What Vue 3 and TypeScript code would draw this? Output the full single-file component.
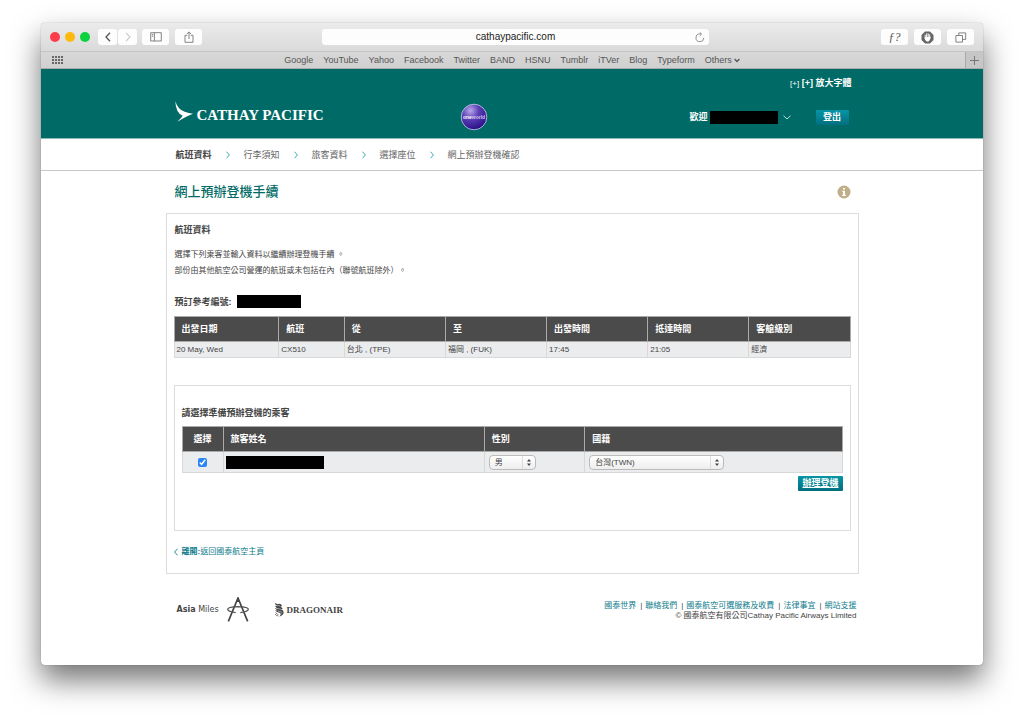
<script setup lang="ts">
import { ref } from 'vue'

const bookmarks: string[] = ['Google', 'YouTube', 'Yahoo', 'Facebook', 'Twitter', 'BAND', 'HSNU', 'Tumblr', 'iTVer', 'Blog', 'Typeform']
const steps: string[] = ['航班資料', '行李須知', '旅客資料', '選擇座位', '網上預辦登機確認']
const flightHeads: string[] = ['出發日期', '航班', '從', '至', '出發時間', '抵達時間', '客艙級別']
const flight: string[] = ['20 May, Wed', 'CX510', '台北 , (TPE)', '福岡 , (FUK)', '17:45', '21:05', '經濟']
const footLinks: string[] = ['國泰世界', '聯絡我們', '國泰航空可選服務及收費', '法律事宜', '網站支援']
const dots: number[] = [0, 1, 2, 3]

const address = ref('cathaypacific.com')
const selected = ref(true)
const gender = ref('男')
const nation = ref('台灣(TWN)')
</script>

<template>
  <div class="desktop">
    <div class="window">
      <div class="toolbar">
        <div class="lights"><i class="red"></i><i class="amber"></i><i class="green"></i></div>
        <div class="nav">
          <button type="button" class="tool half" aria-label="Back">
            <svg width="8" height="10" viewBox="0 0 8 10"><path d="M6 .8 2 5l4 4.200" fill="none" stroke="#555" stroke-width="1.300" /></svg>
          </button>
          <button type="button" class="tool half" aria-label="Forward">
            <svg width="8" height="10" viewBox="0 0 8 10"><path d="M2 .8 6 5 2 9.200" fill="none" stroke="#ccc" stroke-width="1.200" /></svg>
          </button>
        </div>
        <button type="button" class="tool" aria-label="Sidebar">
          <svg width="12" height="10" viewBox="0 0 12 10"><path d="M.7.7h10.600v8.300H.7zM4.400.7V9M1.800 2.600h1.500M1.800 4.200h1.500" fill="none" stroke="#777" stroke-width=".9" /></svg>
        </button>
        <button type="button" class="tool" aria-label="Share">
          <svg width="10" height="12" viewBox="0 0 10 12"><path d="M3.300 4.300H1v7h8v-7H6.700M5 8V1M2.900 3 5 .9 7.100 3" fill="none" stroke="#777" stroke-width=".9" /></svg>
        </button>
        <div class="address">
          <input v-model="address" type="text" aria-label="Address" />
          <button type="button" class="reload" aria-label="Reload">
            <svg width="10" height="11" viewBox="0 0 10 11"><path d="M8.800 5.800A3.900 3.900 0 1 1 5 1.900h1M4.700.2 6.600 2 4.700 3.900" fill="none" stroke="#888" stroke-width=".9" /></svg>
          </button>
        </div>
        <button type="button" class="tool fq" aria-label="Font finder">ƒ?</button>
        <button type="button" class="tool" aria-label="Blocker">
          <svg width="13" height="13" viewBox="0 0 13 13">
            <path d="M4 .5h5L12.500 4v5L9 12.500H4L.5 9V4z" fill="#666" />
            <path d="M4.200 7.500V4.200M5.700 6.500V2.800M7.200 6.500V2.800M8.700 7V3.800" stroke="#fff" stroke-width="1" stroke-linecap="round" />
            <path d="M3.700 6h5.500l.6-.4-.8 3.200-1.500 1.700H5.700L4 8.800z" fill="#fff" />
          </svg>
        </button>
        <button type="button" class="tool last" aria-label="Tabs">
          <svg width="12" height="11" viewBox="0 0 12 11"><path d="M.9 3.500h6.600v6.600H.9zM3.800 3.300V.9h6.900v6.500H7.800" fill="none" stroke="#777" stroke-width=".9" /></svg>
        </button>
      </div>

      <div class="bookmarks">
        <svg class="grid" width="11" height="8" viewBox="0 0 11 8">
          <template v-for="c in dots" :key="c">
            <rect v-for="r in 3" :key="r" :x="c * 3" :y="r * 3 - 3" width="2" height="2" fill="#666" />
          </template>
        </svg>
        <nav class="marks">
          <a v-for="b in bookmarks" :key="b" href="#">{{ b }}</a>
          <a href="#">Others <svg width="6" height="5" viewBox="0 0 6 5"><path d="M.6 1 3 3.500 5.400 1" fill="none" stroke="#555" stroke-width="1.300" /></svg></a>
        </nav>
        <button type="button" class="plus" aria-label="New tab">
          <svg width="9" height="9" viewBox="0 0 9 9"><path d="M4.500 0v9M0 4.500h9" stroke="#777" /></svg>
        </button>
      </div>

      <header class="brandbar">
        <div class="column">
          <div class="utility"><a href="#"><small>[+]</small> [+] 放大字體</a></div>
          <div class="brandrow">
            <a href="#" class="logo">
              <svg width="18" height="21" viewBox="0 0 54 62"><path d="M1 0Q8 24 29 32q12 4 25 6Q34 46 7 62 19 51 23 44 2 34 1 0Z" fill="#fff" /></svg>
              <span>CATHAY PACIFIC</span>
            </a>
            <svg class="oneworld" width="28" height="28" viewBox="0 0 28 28">
              <defs>
                <radialGradient id="globe" cx=".36" cy=".25" r=".75">
                  <stop offset="0" stop-color="#b9a9ea" />
                  <stop offset=".45" stop-color="#5a3fb5" />
                  <stop offset="1" stop-color="#2b1187" />
                </radialGradient>
              </defs>
              <circle cx="14" cy="14" r="12.800" fill="url(#globe)" stroke="#b9bfe2" stroke-width=".9" />
              <text x="14" y="16" text-anchor="middle" font-family="Liberation Sans, sans-serif" font-size="5" fill="#fff"><tspan font-weight="bold">one</tspan><tspan fill="#cfc6f2">world</tspan></text>
            </svg>
            <div class="account">
              <span>歡迎</span><span class="mask name"></span>
              <svg width="8" height="5" viewBox="0 0 8 5"><path d="M.5.7 4 4 7.500.7" fill="none" stroke="#b9dcd8" /></svg>
              <button type="button" class="action">登出</button>
            </div>
          </div>
        </div>
      </header>

      <nav class="steps">
        <ol class="column">
          <li v-for="(s, i) in steps" :key="s" :class="{ current: i === 0 }">
            <svg v-if="i" width="4" height="8" viewBox="0 0 4 8"><path d="M.5.7 3.400 4 .5 7.300" fill="none" stroke="#3fa9b5" /></svg>{{ s }}
          </li>
        </ol>
      </nav>

      <main class="column">
        <div class="titlebar">
          <h1>網上預辦登機手續</h1>
          <svg width="14" height="14" viewBox="0 0 14 14"><circle cx="7" cy="7" r="6.500" fill="#bfae88" /><path d="M6 3h2v1.500H6zM5.300 5.700H8v4h.9V11H5.200V9.700H6V7h-.7z" fill="#fff" /></svg>
        </div>

        <section class="panel">
          <div class="intro">
            <h2>航班資料</h2>
            <p>選擇下列乘客並輸入資料以繼續辦理登機手續 。<br />部份由其他航空公司營運的航班或未包括在內（聯號航班除外）。</p>
            <div class="booking"><span>預訂參考編號:</span><span class="mask ref"></span></div>
          </div>
          <table class="flights">
            <colgroup><col class="f1" /><col class="f2" /><col class="f3" /><col class="f3" /><col class="f3" /><col class="f3" /><col class="f3" /></colgroup>
            <thead><tr><th v-for="h in flightHeads" :key="h">{{ h }}</th></tr></thead>
            <tbody><tr><td v-for="f in flight" :key="f">{{ f }}</td></tr></tbody>
          </table>

          <form class="inner" @submit.prevent>
            <h2>請選擇準備預辦登機的乘客</h2>
            <table class="pax">
              <colgroup><col class="p1" /><col class="p2" /><col class="p3" /><col /></colgroup>
              <thead><tr><th class="mid">選擇</th><th>旅客姓名</th><th>性別</th><th>國籍</th></tr></thead>
              <tbody>
                <tr>
                  <td class="mid"><input v-model="selected" type="checkbox" aria-label="選擇" /></td>
                  <td><span class="mask pax-name"></span></td>
                  <td>
                    <span class="pick short">
                      <select v-model="gender" aria-label="性別"><option>男</option><option>女</option></select>
                      <svg width="15" height="13" viewBox="0 0 15 13"><path d="M1.500 0v13" stroke="#ddd" /><path d="M6 5.500 8 3l2 2.500zM6 7.500 8 10l2-2.500z" fill="#444" /></svg>
                    </span>
                  </td>
                  <td>
                    <span class="pick long">
                      <select v-model="nation" aria-label="國籍"><option>台灣(TWN)</option></select>
                      <svg width="15" height="13" viewBox="0 0 15 13"><path d="M1.500 0v13" stroke="#ddd" /><path d="M6 5.500 8 3l2 2.500zM6 7.500 8 10l2-2.500z" fill="#444" /></svg>
                    </span>
                  </td>
                </tr>
              </tbody>
            </table>
            <div class="submit"><button type="submit" class="action under">辦理登機</button></div>
          </form>

          <a href="#" class="exit"><svg width="4" height="8" viewBox="0 0 4 8"><path d="M3.500.7.600 4l2.900 3.300" fill="none" stroke="#1f8f9c" /></svg><span><b>離開:</b>返回國泰航空主頁</span></a>
        </section>

        <footer>
          <a href="#" class="miles">
            <span><b>Asia</b> Miles</span>
            <svg width="22" height="25" viewBox="0 0 66 75">
              <path d="M4 73 33 3 62 73M33 3v12" fill="none" stroke="#444" stroke-width="5" />
              <path d="M26 47Q2 44 2 37t31-8q31 1 31 8t-24 10" fill="none" stroke="#555" stroke-width="4" />
            </svg>
          </a>
          <a href="#" class="dragon">
            <svg width="11" height="15" viewBox="0 0 33 45">
              <path d="M2 2q8 6 14 3 8 1 8 7l-5 2q7 2 7 7l-5 1q8 3 8 9 0 9-13 13 6-6 3-10-4-3-10-4l-6-6 8 2-9-8 10 2Q3 15 4 11l8 2Q3 9 2 2Z" fill="#444" />
              <path d="M9 9l9 3M8 19l14 3M12 27l13 4M22 34q-3 5-8 6" fill="none" stroke="#fff" stroke-width="1.500" />
              <path d="M5 31q3 6 8 7M3 36q4 6 10 6" fill="none" stroke="#444" stroke-width="2" />
            </svg>
            <span>DRAGONAIR</span>
          </a>
          <div class="legal">
            <div><template v-for="(l, i) in footLinks" :key="l"><span v-if="i" class="bar">|</span><a href="#">{{ l }}</a></template></div>
            <div>© 國泰航空有限公司Cathay Pacific Airways Limited</div>
          </div>
        </footer>
      </main>
    </div>
  </div>
</template>

<style>
body {
  margin: 0;
  background: #fff;
}
</style>

<style scoped>
* {
  box-sizing: border-box;
}
.desktop {
  display: flex;
  min-height: 100vh;
  padding: 23px 41px 59px;
  overflow: hidden;
  font-family: "Liberation Sans", "Noto Sans CJK TC", sans-serif;
  font-size: 8px;
  line-height: 16px;
  color: #444;
}
.window {
  flex: 1;
  min-width: 0;
  border-radius: 4px;
  background: #fff;
  box-shadow: 0 0 1px rgba(0, 0, 0, 0.5), 0 15px 30px rgba(0, 0, 0, 0.55);
}
a {
  color: inherit;
  text-decoration: none;
}
button,
input,
select {
  margin: 0;
  padding: 0;
  border: 0;
  font: inherit;
  color: inherit;
}
svg {
  display: block;
  flex: none;
}
h1,
h2,
p,
ol {
  margin: 0;
  padding: 0;
}
.toolbar {
  display: flex;
  align-items: center;
  height: 29px;
  padding: 0 9px;
  border-bottom: 1px solid #c4c4c4;
  border-radius: 4px 4px 0 0;
  background: linear-gradient(#ebebeb, #dadada);
}
.lights {
  display: flex;
  gap: 5px;
  margin-right: 8px;
}
.lights i {
  width: 10px;
  height: 10px;
  border-radius: 50%;
}
.red {
  background: #fc3d4b;
}
.amber {
  background: #fdb90c;
}
.green {
  background: #0cd23e;
}
.nav {
  display: flex;
  gap: 1px;
  margin-right: 5px;
}
.tool {
  display: flex;
  align-items: center;
  justify-content: center;
  width: 27px;
  height: 16px;
  margin-right: 6px;
  border-radius: 3px;
  background: #fdfdfd;
}
.half {
  width: 19px;
  margin: 0;
}
.last {
  margin-right: 0;
}
.address {
  display: flex;
  align-items: center;
  flex: 0 1 387px;
  height: 16px;
  margin: 0 auto 0 114px;
  padding: 0 4px 0 14px;
  border-radius: 3px;
  background: #fdfdfd;
}
.address input {
  flex: 1;
  min-width: 0;
  background: none;
  font-size: 10px;
  text-align: center;
  color: #222;
}
.reload {
  background: none;
}
.fq {
  font: italic 12px/16px "Liberation Serif", serif;
  color: #555;
}
.bookmarks {
  display: flex;
  align-items: center;
  height: 17px;
  padding-left: 11px;
  border-bottom: 1px solid #aaa;
  background: linear-gradient(#d8d8d8, #d0d0d0);
  font-size: 9px;
  color: #555;
}
.marks {
  display: flex;
  flex: 1;
  justify-content: center;
  gap: 10px;
  padding-right: 4px;
}
.marks a {
  display: flex;
  align-items: center;
  gap: 2px;
}
.plus {
  display: flex;
  align-items: center;
  justify-content: center;
  width: 18px;
  height: 16px;
  border-left: 1px solid #aaa;
  background: #c6c6c6;
}
.column {
  width: 100%;
  max-width: 693px;
  margin: 0 auto;
}
.brandbar {
  height: 70px;
  border-bottom: 1px solid #8fb9b6;
  background: #006b66;
  color: #fff;
  font-size: 9px;
  font-weight: bold;
}
.utility {
  display: flex;
  justify-content: flex-end;
  height: 28px;
  padding: 6px 7px 0 0;
}
.utility small {
  font-size: 8px;
  font-weight: normal;
}
.brandrow {
  display: flex;
  align-items: center;
  height: 40px;
  padding: 0 10px 0 9px;
}
.logo {
  display: flex;
  align-items: flex-start;
  gap: 4px;
  width: 285px;
  height: 32px;
  font: bold 15px/28px "Liberation Serif", serif;
}
.account {
  display: flex;
  align-items: center;
  margin-left: auto;
}
.mask {
  display: block;
  height: 13px;
  background: #000;
}
.name {
  width: 68px;
  margin: 0 5px 0 2px;
}
.action {
  height: 15px;
  padding: 0 4px;
  border-radius: 1px;
  background: linear-gradient(#0795a5, #006f80);
  font-size: 9px;
  font-weight: bold;
  line-height: 15px;
  color: #fff;
}
.account .action {
  width: 33px;
  margin-left: 25px;
}
.under {
  text-decoration: underline;
}
.steps {
  padding: 8px 0 7px;
  border-bottom: 1px solid #c8c8c8;
  font-size: 9px;
  color: #666;
}
.steps ol {
  display: flex;
  gap: 14px;
  padding-left: 10px;
  list-style: none;
}
.steps li {
  display: flex;
  align-items: center;
  gap: 14px;
}
.current {
  font-weight: bold;
  color: #444;
}
.titlebar {
  display: flex;
  align-items: center;
  justify-content: space-between;
  height: 42px;
  padding: 0 8px 0 9px;
}
h1 {
  font-size: 13px;
  font-weight: 500;
  color: #006b66;
}
.panel {
  padding: 8px 7px 13px;
  border: 1px solid #dcdcdc;
}
.intro {
  padding-left: 1px;
}
h2 {
  font-size: 9px;
  font-weight: bold;
  line-height: 16px;
}
p {
  margin-top: 9px;
}
.booking {
  display: flex;
  gap: 5px;
  margin: 16px 0 7px;
  font-size: 9px;
  font-weight: bold;
  line-height: 14px;
}
.ref {
  width: 64px;
}
table {
  width: 100%;
  table-layout: fixed;
  border-collapse: collapse;
}
th,
td {
  border: 1px solid #d8d8d8;
  text-align: left;
}
th {
  height: 25px;
  padding: 0 7px;
  border-color: #aaa;
  background: #4b4b4b;
  font-size: 9px;
  line-height: 16px;
  color: #fff;
}
td {
  height: 16px;
  padding: 0 2px;
  background: #ebecee;
  line-height: 14px;
}
.f1 {
  width: 15.5%;
}
.f2 {
  width: 9.7%;
}
.inner {
  margin-top: 27px;
  padding: 19px 7px 39px;
  border: 1px solid #dcdcdc;
}
.inner h2 {
  margin-bottom: 5px;
}
.p1 {
  width: 41px;
}
.p2 {
  width: 39.6%;
}
.p3 {
  width: 15.2%;
}
.pax td {
  height: 21px;
}
.pax .mid {
  padding: 0;
  text-align: center;
}
.pax input {
  display: block;
  width: 9px;
  height: 9px;
  margin: 0 auto;
  accent-color: #2a86f5;
}
.pax-name {
  width: 98px;
}
.pick {
  display: block;
  position: relative;
  margin-left: 2px;
}
.pick select {
  display: block;
  width: 100%;
  height: 15px;
  padding: 0 14px 0 5px;
  border: 1px solid #bbb;
  border-radius: 4px;
  background: linear-gradient(#fff, #eee);
  appearance: none;
}
.pick svg {
  position: absolute;
  top: 1px;
  right: 0;
  pointer-events: none;
}
.short {
  width: 47px;
}
.long {
  width: 135px;
}
.submit {
  display: flex;
  justify-content: flex-end;
  margin-top: 3px;
}
.exit {
  display: flex;
  align-items: center;
  gap: 4px;
  margin-top: 13px;
  color: #0f7c8c;
}
footer {
  display: flex;
  align-items: flex-start;
  padding: 23px 2px 0 11px;
}
.miles,
.dragon {
  display: flex;
  align-items: center;
  height: 25px;
}
.miles {
  gap: 8px;
  font-family: "DejaVu Sans", sans-serif;
}
.dragon {
  gap: 2px;
  margin-left: 25px;
  font: bold 9px/16px "Liberation Serif", serif;
}
.legal {
  margin: 4px 0 0 auto;
  line-height: 10px;
  text-align: right;
}
.legal a {
  color: #0f7c8c;
}
.bar {
  margin: 0 3px 0 4px;
}
</style>
